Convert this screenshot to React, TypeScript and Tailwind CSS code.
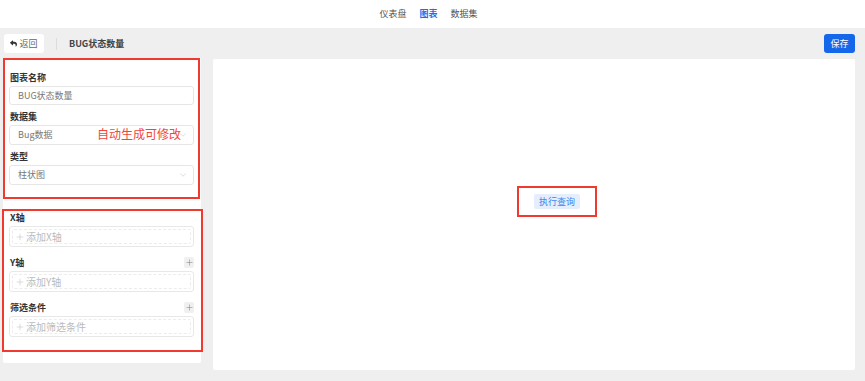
import { FaReply } from "react-icons/fa";
import { ChevronDown, Plus } from "lucide-react";

function Field({ label, children }: { label: string; children: React.ReactNode }) {
  return (
    <div className="flex flex-col">
      <div className="h-[12px] leading-[12px] text-[9px] font-semibold text-[#333] pl-[1px]">{label}</div>
      {children}
    </div>
  );
}

function Select({ value }: { value: string }) {
  return (
    <div className="mt-[2px] h-[20px] border border-[#e6e6e6] rounded-[3px] flex items-center pl-[8px] pr-[5px] text-[9px] text-[#777]">
      <span className="flex-1">{value}</span>
      <ChevronDown size={10} strokeWidth={1.2} className="text-[#bbb]" />
    </div>
  );
}

function AxisInput({ placeholder }: { placeholder: string }) {
  return (
    <div className="h-[21px] border border-[#e8e8e8] rounded-[3px] p-[2px]">
      <div className="h-full border border-dashed border-[#ececec] rounded-[2px] flex items-center pl-[2px] text-[10px] text-[#bbb]">
        <Plus size={10} strokeWidth={1.2} className="mr-[1px]" />
        {placeholder}
      </div>
    </div>
  );
}

function AxisLabel({ label, add }: { label: string; add?: boolean }) {
  return (
    <div className="h-[11px] flex items-center justify-between">
      <span className="text-[9px] font-semibold text-[#333] pl-[1px]">{label}</span>
      {add && (
        <span className="w-[10px] h-[11px] bg-[#f0f0f0] rounded-[2px] flex items-center justify-center text-[#888]">
          <Plus size={9} strokeWidth={1.5} />
        </span>
      )}
    </div>
  );
}

export default function App() {
  return (
    <div className="w-[865px] h-[381px] overflow-hidden flex flex-col bg-[#efefef] font-['Noto_Sans_CJK_SC',sans-serif]">
      <nav className="h-[28px] bg-white flex items-center justify-center gap-[13px] pr-[8px] text-[9px] text-[#555]">
        <span>仪表盘</span>
        <span className="text-[#1a6ff0] font-bold">图表</span>
        <span>数据集</span>
      </nav>

      <div className="flex-1 pl-[3px] pr-[10px] flex flex-col">
        <div className="mt-[6px] h-[19px] flex items-center">
          <button className="ml-[1px] w-[40px] h-[19px] bg-white rounded-[3px] flex items-center justify-center gap-[2px] text-[9px] text-[#666]">
            <FaReply size={7} className="text-[#333]" />
            返回
          </button>
          <div className="ml-[12px] w-px h-[12px] bg-[#dcdcdc]" />
          <span className="ml-[12px] text-[9px] font-semibold text-[#444]">BUG状态数量</span>
          <button className="ml-auto w-[31px] h-[19px] bg-[#1467ea] rounded-[3px] text-[9px] text-white">
            保存
          </button>
        </div>

        <div className="mt-[5px] flex items-start">
          <aside className="w-[198px] h-[305px] bg-white rounded-[2px] flex flex-col">
            <section className="w-[197px] border-2 border-[#f03a30] pt-[12px] pb-[12px] px-[4px] flex flex-col gap-[6px]">
              <Field label="图表名称">
                <div className="mt-[2px] h-[19px] border border-[#e6e6e6] rounded-[3px] flex items-center pl-[8px] text-[9px] text-[#777]">
                  BUG状态数量
                </div>
              </Field>
              <Field label="数据集">
                <div className="relative">
                  <Select value="Bug数据" />
                  <span className="absolute left-[88px] top-[3px] text-[12px] leading-[16px] text-[#f2453d]">
                    自动生成可修改
                  </span>
                </div>
              </Field>
              <Field label="类型">
                <Select value="柱状图" />
              </Field>
            </section>

            <section className="mt-[10px] -ml-px w-[201px] border-2 border-[#f03a30] pt-[1px] pb-[13px] pl-[5px] pr-[7px] flex flex-col">
              <AxisLabel label="X轴" />
              <div className="mt-[3px]">
                <AxisInput placeholder="添加X轴" />
              </div>
              <div className="mt-[10px]">
                <AxisLabel label="Y轴" add />
              </div>
              <div className="mt-[3px]">
                <AxisInput placeholder="添加Y轴" />
              </div>
              <div className="mt-[10px]">
                <AxisLabel label="筛选条件" add />
              </div>
              <div className="mt-[3px]">
                <AxisInput placeholder="添加筛选条件" />
              </div>
            </section>
          </aside>

          <main className="ml-[12px] mt-px flex-1 h-[311px] bg-white rounded-[2px] pt-[127px] pl-[304px]">
            <div className="w-[80px] h-[31px] border-[2.5px] border-[#f03a30] flex items-center justify-center">
              <button className="w-[46px] h-[15px] bg-[#e4eefc] rounded-[2px] text-[9px] text-[#3f86ee]">
                执行查询
              </button>
            </div>
          </main>
        </div>
      </div>
    </div>
  );
}
